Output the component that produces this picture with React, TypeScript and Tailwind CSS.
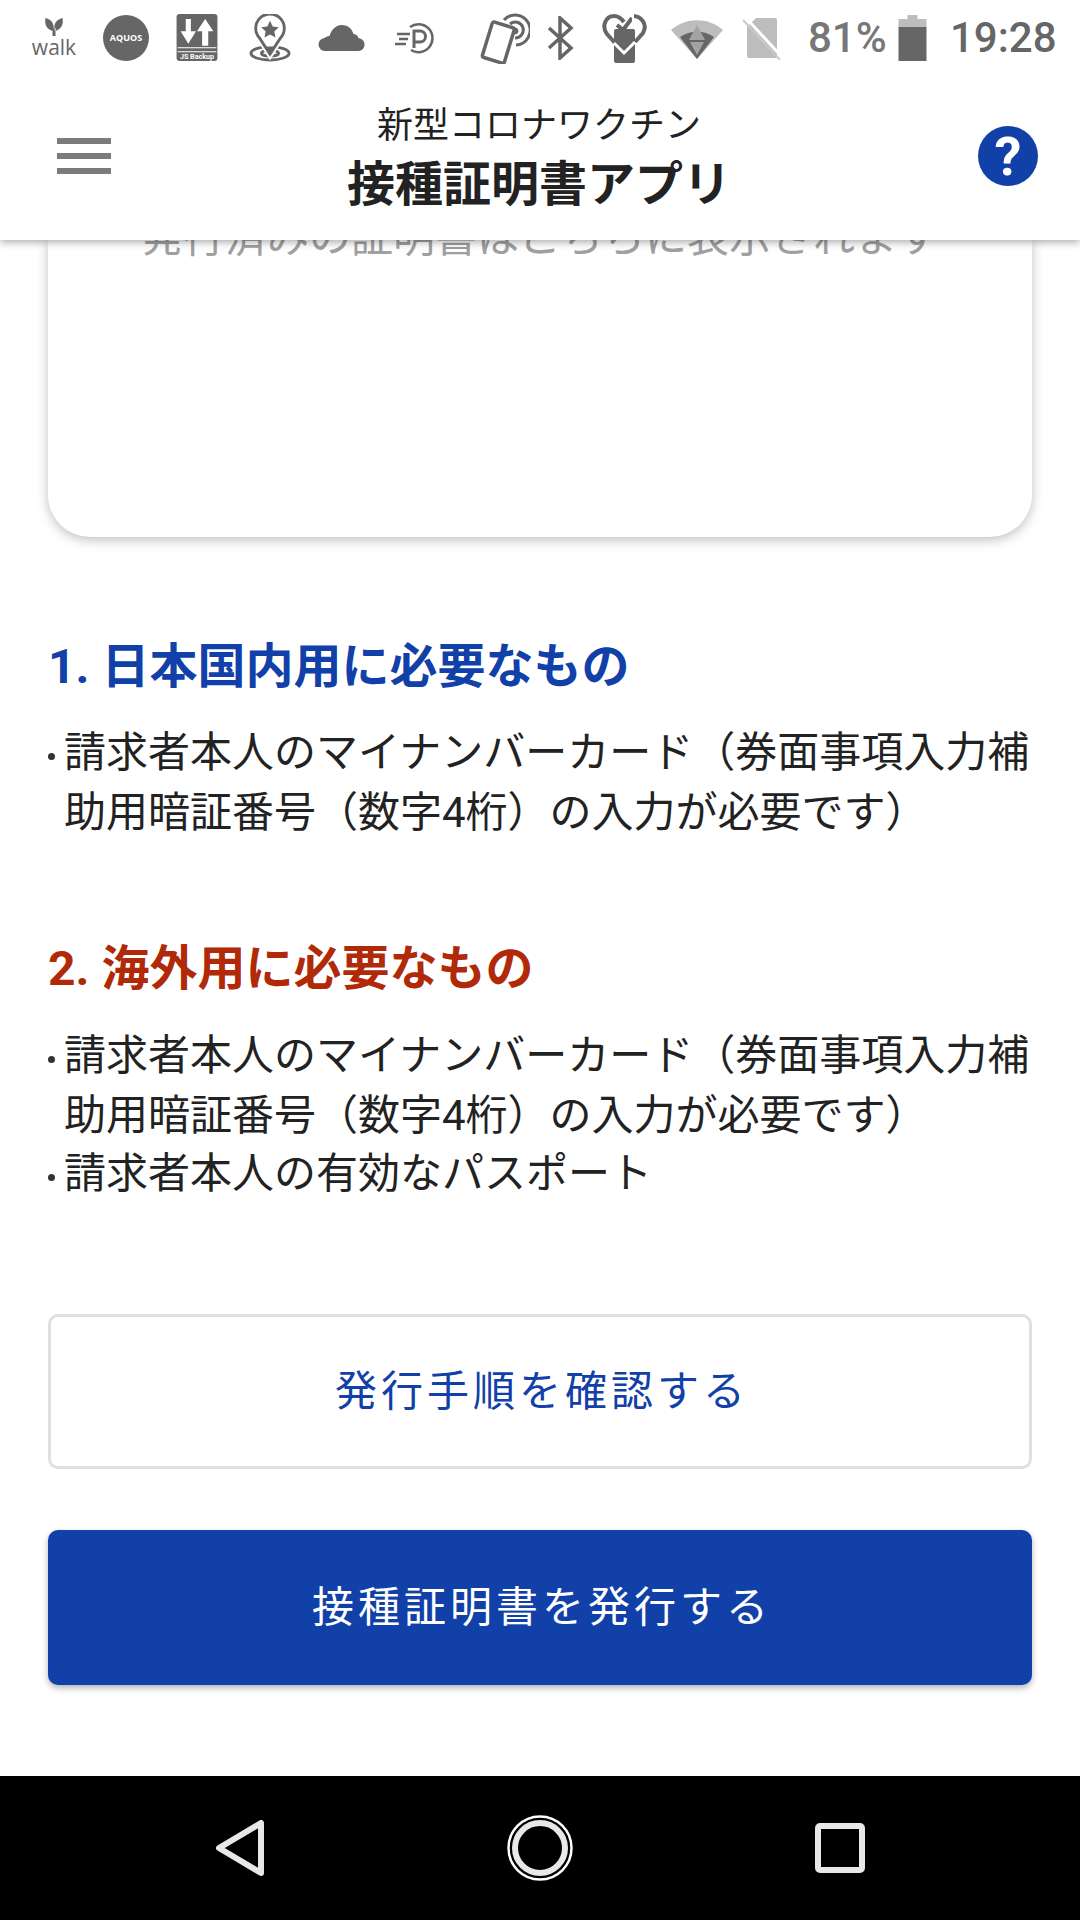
const JP = "font-['Roboto','Noto_Sans_CJK_JP',sans-serif]";

const requiredCard = '請求者本人のマイナンバーカード（券面事項入力補助用暗証番号（数字4桁）の入力が必要です）';

function Bullet({ children }: { children: string }) {
  return (
    <div className="flex text-[42px] leading-[60px] text-[#222]">
      <div className="w-[16px] shrink-0 pt-[30px]">
        <div className="h-[7px] w-[7px] rounded-full bg-[#333]" />
      </div>
      <p className="flex-1">{children}</p>
    </div>
  );
}

function StatusIcons() {
  return (
    <div className="flex items-center text-[#666]">
      {/* walk */}
      <div className="ml-[33px] flex w-[42px] flex-col items-center">
        <svg width="20" height="18" viewBox="0 0 20 18" fill="#666">
          <path d="M9.2 13C3.5 12 0 7 1.5 0 6 1 9.5 4 9.7 9zM10.8 13C16.5 12 20 7 18.5 0 14 1 10.500 4 10.300 9zM8.500 10h3v8h-3z" />
        </svg>
        <span className="font-['Open_Sans'] text-[21px] leading-[22px]">walk</span>
      </div>
      {/* AQUOS */}
      <div className="ml-[28px] flex h-[46px] w-[46px] items-center justify-center rounded-full bg-[#666] font-['Open_Sans'] text-[9px] font-bold text-white">
        AQUOS
      </div>
      {/* JS Backup */}
      <svg className="ml-[27px]" width="42" height="47" viewBox="0 0 40 46">
        <rect width="40" height="46" rx="3" fill="#666" />
        <path d="M9 5h5v12h5l-7.5 12L4 17h5zM28 5l8 12h-5v14h-6V17h-5z" fill="#fff" />
        <path d="M1 33h38M1 37h38" stroke="#fff" strokeWidth="1" />
        <text x="20" y="44" fontSize="7" fontWeight="700" textAnchor="middle" fill="#fff">JS Backup</text>
      </svg>
      {/* map pin */}
      <svg className="ml-[31px]" width="42" height="48" viewBox="0 0 44 50" fill="none">
        <ellipse cx="22" cy="41" rx="20" ry="7" stroke="#666" strokeWidth="3" />
        <ellipse cx="22" cy="41" rx="9" ry="3" stroke="#666" strokeWidth="3" />
        <path d="M22 42 11 25a15 15 0 1 1 22 0z" stroke="#fff" strokeWidth="7" />
        <path d="M22 42 11 25a15 15 0 1 1 22 0z" stroke="#666" strokeWidth="3" fill="#fff" />
        <path d="M22 43 17 34h10z" fill="#666" />
        <path d="m22 7 2.8 6 6.4.7-4.7 4.4 1.3 6.4-5.8-3.2-5.8 3.2 1.3-6.4-4.7-4.4 6.4-.7z" fill="#666" />
      </svg>
      {/* cloud */}
      <svg className="ml-[27px]" width="47" height="26" viewBox="0 0 46 26" fill="#666">
        <path d="M7 26a6.5 6.5 0 0 1-1-13c1-1 3-2 5-2C13 4 18 0 23 0c6 0 10 3 12 9 2 0 4 1 5 4 4 1 6 3 6 7 0 3-3 6-6 6z" />
      </svg>
      {/* P */}
      <svg className="ml-[29px]" width="42" height="32" viewBox="0 0 40 32" fill="none" stroke="#666">
        <path d="M2 12h13M4 17h9M0 22h11" strokeWidth="2.5" />
        <path d="M15 5a14 14 0 1 1 1 23" strokeWidth="2.5" />
        <path d="M19 26V9h6a5 5 0 0 1 0 11h-6" strokeWidth="3" />
      </svg>
      {/* NFC phone */}
      <svg className="ml-[42px]" width="52" height="52" viewBox="0 0 52 52" fill="none" stroke="#666">
        <path d="M26 8a15 15 0 1 1 12 25" strokeWidth="3" />
        <path d="M32 12a8 8 0 1 1 5 14" strokeWidth="3" />
        <circle cx="37" cy="19" r="3" fill="#666" strokeWidth="1" />
        <rect x="9" y="12" width="23" height="37" rx="2" fill="#fff" strokeWidth="3.5" transform="rotate(17 20 30)" />
      </svg>
      {/* bluetooth */}
      <svg className="ml-[17px]" width="28" height="44" viewBox="0 0 28 44" fill="none" stroke="#666" strokeWidth="3.5">
        <path d="m2 12 22 20-11 10V2l11 10L2 32" />
      </svg>
      {/* heart */}
      <svg className="ml-[26px]" width="46" height="50" viewBox="0 0 46 50" fill="none">
        <path d="M14 30 6 21C0 13 5 3 13 3c4 0 7 2 10 6M32 3c8 0 15 8 10 17l-8 9" stroke="#666" strokeWidth="4" />
        <rect x="13" y="16" width="21" height="34" rx="2" fill="#666" />
        <path d="m13 30 10 10 11-11" stroke="#fff" strokeWidth="3" />
        <path d="m16 12 6 5 9-12" stroke="#666" strokeWidth="4" />
        <path d="M32 1v14" stroke="#fff" strokeWidth="2" />
      </svg>
      {/* wifi */}
      <svg className="ml-[24px]" width="52" height="42" viewBox="0 0 52 42">
        <path d="M0 13C15 0 37 0 52 13L26 42z" fill="#bdbdbd" />
        <path d="M9 20c10-7 24-7 34 0L26 42z" fill="#666" />
        <path d="m26 8 8 15H18zM19 25h14l-7 13z" fill="#a3a3a3" />
      </svg>
      {/* no sim */}
      <svg className="ml-[19px]" width="40" height="44" viewBox="0 0 40 44" fill="none">
        <path d="M14 2h19a2 2 0 0 1 2 2v36a2 2 0 0 1-2 2H7a2 2 0 0 1-2-2V11z" fill="#bdbdbd" />
        <path d="m1 4 37 40" stroke="#c8c8c8" strokeWidth="2" />
        <path d="m5 3 34 37" stroke="#fff" strokeWidth="3" />
      </svg>
    </div>
  );
}

export default function App() {
  return (
    <div className={`flex h-[1920px] w-[1080px] flex-col overflow-hidden bg-white ${JP}`}>
      <div className="relative z-20 flex h-[75px] shrink-0 items-center bg-white">
        <StatusIcons />
        <span className="ml-[26px] w-[77px] font-['Roboto'] text-[42px] font-medium text-[#777]">81%</span>
        <svg className="ml-[13px]" width="29" height="46" viewBox="0 0 28 46">
          <path d="M9 0h10v4h9v8H0V4h9z" fill="#bdbdbd" />
          <rect y="12" width="28" height="34" fill="#666" />
        </svg>
        <span className="ml-[23px] font-['Roboto'] text-[42px] font-medium text-[#666]">19:28</span>
      </div>

      <header className="relative z-10 flex h-[165px] shrink-0 items-center justify-between bg-white pr-[42px] pb-[3px] pl-[57px] shadow-[0_2px_8px_rgba(0,0,0,0.35)]">
        <div className="flex w-[54px] flex-col gap-[9px]">
          <div className="h-[6px] bg-[#7b7b7b]" />
          <div className="h-[6px] bg-[#7b7b7b]" />
          <div className="h-[6px] bg-[#7b7b7b]" />
        </div>
        <div className="mr-[11px] flex flex-col items-center pt-[3px] text-[#222]">
          <div className="text-[36px] leading-[50px]">新型コロナワクチン</div>
          <div className="mt-[4px] text-[48px] leading-[60px] font-bold">接種証明書アプリ</div>
        </div>
        <div className="flex h-[60px] w-[60px] items-center justify-center rounded-full bg-[#1140a8] font-['Roboto'] text-[54px] font-bold text-white">
          ?
        </div>
      </header>

      <main className="flex-1 overflow-hidden px-[48px]">
        <div className="h-[297px] overflow-hidden rounded-b-[42px] bg-white shadow-[0_3px_12px_rgba(0,0,0,0.25)]">
          <p className="-mt-[30px] text-center text-[42px] leading-[56px] text-[#a0a0a0]">
            発行済みの証明書はこちらに表示されます
          </p>
        </div>

        <h2 className="mt-[100px] text-[48px] leading-[60px] font-bold text-[#1140a8]">1. 日本国内用に必要なもの</h2>
        <div className="mt-[26px]">
          <Bullet>{requiredCard}</Bullet>
        </div>

        <h2 className="mt-[96px] text-[48px] leading-[60px] font-bold text-[#b02a0a]">2. 海外用に必要なもの</h2>
        <div className="mt-[27px] flex flex-col gap-[0px]">
          <Bullet>{requiredCard}</Bullet>
          <div className="-mt-[2px]">
            <Bullet>請求者本人の有効なパスポート</Bullet>
          </div>
        </div>

        <button className="mt-[110px] flex h-[155px] w-full items-center justify-center rounded-[10px] border-[3px] border-[#e0e0e0] bg-white pl-[4px] text-[42px] tracking-[4px] text-[#1140a8]">
          発行手順を確認する
        </button>
        <button className="mt-[61px] flex h-[155px] w-full items-center justify-center rounded-[10px] bg-[#1140a8] pl-[4px] text-[42px] tracking-[4px] text-white shadow-[0_3px_6px_rgba(0,0,0,0.3)]">
          接種証明書を発行する
        </button>
      </main>

      <nav className="flex h-[144px] shrink-0 items-center justify-center bg-black">
        <div className="grid w-[900px] grid-cols-3 items-center justify-items-center">
          <svg width="48" height="56" viewBox="0 0 48 56" fill="none" stroke="#e8e8e8" strokeWidth="6" strokeLinejoin="round">
            <path d="M45 3v50L3 28z" />
          </svg>
          <svg width="66" height="66" viewBox="0 0 66 66" fill="none">
            <circle cx="33" cy="33" r="31.5" stroke="#fff" strokeWidth="2.5" />
            <circle cx="33" cy="33" r="25" stroke="#e8e8e8" strokeWidth="6" />
          </svg>
          <svg width="50" height="50" viewBox="0 0 50 50" fill="none" stroke="#e8e8e8" strokeWidth="6">
            <rect x="3" y="3" width="44" height="44" rx="2" />
          </svg>
        </div>
      </nav>
    </div>
  );
}
